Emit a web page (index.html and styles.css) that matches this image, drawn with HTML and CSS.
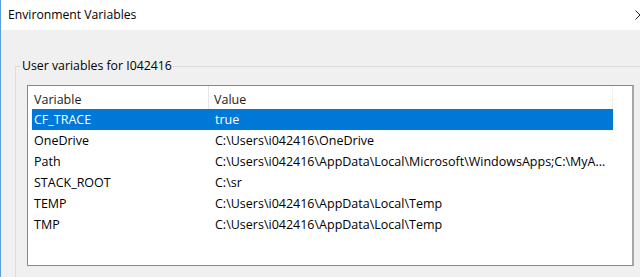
FILE: index.html
```html
<!DOCTYPE html>
<html>
<head>
<meta charset="utf-8">
<link rel="stylesheet" href="styles.css">
</head>
<body>
<div class="window">
  <div class="titlebar">
    <span class="title">Environment Variables</span>
    <svg class="close" width="10" height="10" viewBox="0 0 10 10"><path d="M0.5 0.5 L9.5 9.5 M9.5 0.5 L0.5 9.5" stroke="#222" stroke-width="1" fill="none"/></svg>
  </div>
  <div class="content">
    <fieldset class="group">
      <legend class="legend">User variables for I042416</legend>
      <div class="list">
        <div class="header">
          <div class="hcell col1">Variable</div>
          <div class="hcell col2">Value</div>
        </div>
        <div class="rows">
          <div class="row selected"><div class="cell col1">CF_TRACE</div><div class="cell col2">true</div></div>
          <div class="row"><div class="cell col1">OneDrive</div><div class="cell col2">C:\Users\i042416\OneDrive</div></div>
          <div class="row"><div class="cell col1">Path</div><div class="cell col2">C:\Users\i042416\AppData\Local\Microsoft\WindowsApps;C:\MyA...</div></div>
          <div class="row"><div class="cell col1">STACK_ROOT</div><div class="cell col2">C:\sr</div></div>
          <div class="row"><div class="cell col1">TEMP</div><div class="cell col2">C:\Users\i042416\AppData\Local\Temp</div></div>
          <div class="row"><div class="cell col1">TMP</div><div class="cell col2">C:\Users\i042416\AppData\Local\Temp</div></div>
        </div>
      </div>
    </fieldset>
  </div>
</div>
</body>
</html>
```
FILE: styles.css
```css
html, body {
  margin: 0;
  padding: 0;
  width: 640px;
  height: 277px;
  overflow: hidden;
}
body {
  font-family: "Open Sans", "Noto Sans", sans-serif;
  font-size: 12.5px;
  color: #000;
  background: #f0f0f0;
}
.window {
  height: 277px;
  border-left: 1px solid #5d9fd5;
  display: flex;
  flex-direction: column;
  background: #f0f0f0;
}
.titlebar {
  height: 30px;
  flex: none;
  background: #fff;
  display: flex;
  align-items: center;
  justify-content: space-between;
  padding-left: 7px;
  box-sizing: border-box;
}
.title {
  font-size: 12.2px;
  color: #000;
  padding-bottom: 1px;
}
.close {
  flex: none;
  margin-right: -5px;
  margin-top: -1px;
}
.content {
  flex: 1;
  padding-top: 27px;
  padding-left: 14px;
}
.group {
  margin: 0;
  border: 1px solid #dcdcdc;
  border-right: none;
  border-bottom: none;
  padding: 10px 0 0 0;
  height: 222px;
  box-sizing: border-box;
}
.legend {
  padding: 0 1px;
  margin-left: 5px;
  font-size: 12.3px;
  line-height: 18px;
}
.list {
  margin-left: 11px;
  width: 604px;
  height: 179px;
  background: #fff;
  border: 1px solid #828790;
  border-right: 2px solid #a8a8a8;
  box-sizing: content-box;
  display: flex;
  flex-direction: column;
}
.header {
  height: 23px;
  display: flex;
  flex: none;
}
.hcell {
  display: flex;
  align-items: center;
  box-sizing: border-box;
  padding-top: 3px;
  color: #1a1a1a;
}
.hcell.col1 {
  width: 181px;
  padding-left: 6px;
  border-right: 1px solid #e5e5e5;
}
.hcell.col2 {
  width: 404px;
  padding-left: 5px;
  border-right: 1px solid #f0f0f0;
}
.rows {
  display: flex;
  flex-direction: column;
  padding-left: 4px;
}
.row {
  height: 21px;
  width: 581px;
  display: flex;
  align-items: center;
}
.row.selected {
  background: #0078d7;
  color: #fff;
}
.cell {
  white-space: nowrap;
  box-sizing: border-box;
}
.cell.col1 {
  width: 179px;
  padding-left: 2px;
}
.cell.col2 {
  padding-left: 4px;
}
```
